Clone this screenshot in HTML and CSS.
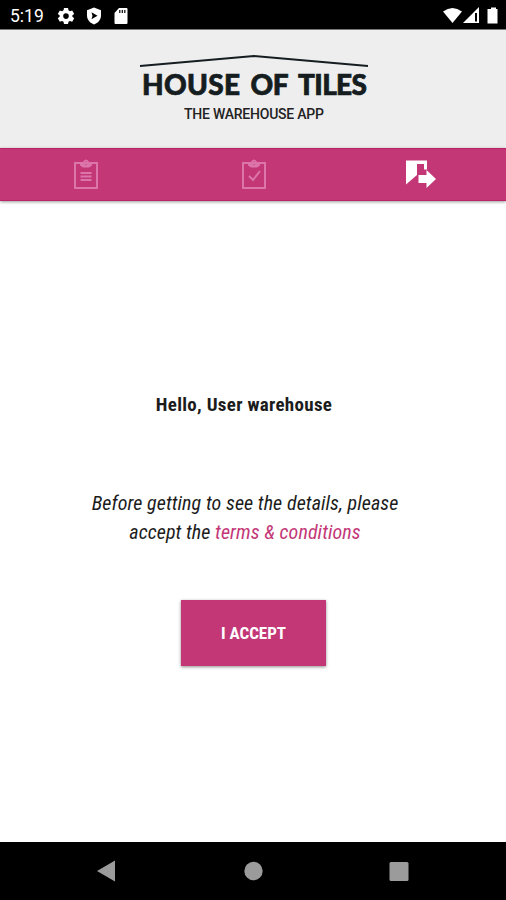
FILE: index.html
```html
<!DOCTYPE html>
<html lang="en">
<head>
  <meta charset="UTF-8" />
  <meta name="viewport" content="width=device-width, initial-scale=1.0" />
  <title>House of Tiles - The Warehouse App</title>
  <link rel="stylesheet" href="styles.css">
</head>
<body>
  <div class="status-bar">
    <div class="status-left">
      <span class="clock">5:19</span>
      <svg width="18" height="18" viewBox="0 0 18 18" fill="#fff">
        <path fill-rule="evenodd" d="M7 1h4l.5 2.300 1.500.9 2.200-.8 2 3.500L15.400 8.300v1.500l1.800 1.500-2 3.400-2.200-.8-1.500.9L11 17H7l-.5-2.200-1.500-.9-2.200.8-2-3.400 1.800-1.500V8.300L.8 6.900l2-3.500 2.200.8 1.500-.9zM9 6.300a2.800 2.800 0 1 0 0 5.600 2.800 2.800 0 0 0 0-5.600z"/>
      </svg>
      <svg width="16" height="18" viewBox="0 0 16 18">
        <path fill="#fff" d="M8 .5l7 2.800v5.200c0 4.300-3 7.500-7 9-4-1.500-7-4.700-7-9V3.300z"/>
        <path fill="#000" d="M5.500 5.300l6 3.500-6 3.500 1-3.500z"/>
      </svg>
      <svg width="14" height="16" viewBox="0 0 14 16">
        <path fill="#fff" d="M5 0h7.500q1 0 1 1v14q0 1-1 1h-11q-1 0-1-1V5z"/>
        <path stroke="#000" stroke-width="1.200" d="M5.800 2v3M8.300 2v3M10.800 2v3"/>
      </svg>
    </div>
    <svg class="status-right" width="56" height="18" viewBox="0 0 56 18" fill="#fff">
      <path d="M0 4.500Q9.500-2.500 19 4.500L9.500 16z"/>
      <path fill-rule="evenodd" d="M36 0v16H20zM32 6v8.500h2V6z"/>
      <path d="M46.500 2H48V.5h5V2h1.500v14.500h-10V2z"/>
    </svg>
  </div>

  <header>
    <svg class="logo" width="230" height="70" viewBox="0 0 230 70">
      <path d="M1 12L115 2l114 10" fill="none" stroke="#151d20" stroke-width="2"/>
      <g class="logo-name">
        <text x="3" y="40.500" textLength="98">HOUSE</text>
        <text x="111.500" y="40.500" textLength="38">OF</text>
        <text x="159" y="40.500" textLength="69">TILES</text>
      </g>
      <text class="logo-sub" x="45" y="64.500" textLength="140">THE WAREHOUSE APP</text>
    </svg>
  </header>

  <nav class="tabs">
    <a class="tab">
      <svg width="26" height="32" viewBox="0 0 26 32" fill="none" stroke="#dc76aa" stroke-width="2">
        <path d="M2 4h22v25H2zM7.500 14h11M7.500 17.500h11M7.500 21h11"/>
        <path fill="#dc76aa" stroke="none" fill-rule="evenodd" d="M7 3h3q1-2.500 3-2.500T16 3h3v3.500l-3 2h-6l-3-2zM11 4a2 1.500 0 1 0 4 0 2 1.500 0 1 0-4 0z"/>
      </svg>
    </a>
    <a class="tab">
      <svg width="26" height="32" viewBox="0 0 26 32" fill="none" stroke="#dc76aa" stroke-width="2">
        <path d="M2 4h22v25H2zM8 17l4 4 7-9"/>
        <path fill="#dc76aa" stroke="none" fill-rule="evenodd" d="M7 3h3q1-2.500 3-2.500T16 3h3v3.500l-3 2h-6l-3-2zM11 4a2 1.500 0 1 0 4 0 2 1.500 0 1 0-4 0z"/>
      </svg>
    </a>
    <a class="tab">
      <svg width="32" height="32" viewBox="0 0 32 32" fill="#fff">
        <path d="M1 1.500h21v9h-3V5h-7v11L1 25.500z"/>
        <path d="M13.500 16h8v-5L31 20l-9.500 9v-5h-8z"/>
      </svg>
    </a>
  </nav>

  <main>
    <h2>Hello, User warehouse</h2>
    <p class="terms">Before getting to see the details, please<br>accept the <a>terms &amp; conditions</a></p>
    <button><span>I ACCEPT</span></button>
  </main>

  <footer class="system-nav">
    <svg width="506" height="58" viewBox="0 0 506 58" fill="#9b9b9b">
      <path d="M97 29L115 18.500v21z"/>
      <circle cx="253.500" cy="29" r="9.200"/>
      <rect x="389.500" y="20" width="19" height="19" rx="1.500"/>
    </svg>
  </footer>
</body>
</html>
```
FILE: styles.css
```css
body {
  margin: 0;
  height: 900px;
  display: flex;
  flex-direction: column;
  overflow: hidden;
  background: #fff;
  font-family: "Roboto Condensed", Roboto, sans-serif;
  font-stretch: condensed;
  color: #1c1c1c;
}
svg {
  display: block;
}
.status-bar {
  height: 30px;
  box-sizing: border-box;
  padding: 2px 7px 0 10px;
  display: flex;
  justify-content: space-between;
  align-items: center;
  background: #000;
  border-bottom: 1px solid #777;
}
.status-left {
  display: flex;
  align-items: center;
  gap: 11.5px;
}
.clock {
  width: 35px;
  font-family: Roboto, sans-serif;
  font-stretch: normal;
  font-size: 17.5px;
  color: #fff;
}
header {
  height: 118px;
  display: flex;
  background: #eee;
}
.logo {
  margin: 24px auto 0 139px;
}
.logo-name {
  font: 900 28px Lato, sans-serif;
  fill: #151d20;
  stroke: #151d20;
  stroke-width: 0.7px;
}
.logo-sub {
  font: 500 14px Roboto, sans-serif;
  fill: #222;
}
.tabs {
  height: 53px;
  display: grid;
  grid-template-columns: repeat(3, 167.500px);
  background: #c33777;
  border-top: 1px solid #b82567;
  border-bottom: 1px solid #b82567;
  box-sizing: border-box;
  box-shadow: 0 1px 3px rgba(0,0,0,0.4);
}
.tab {
  display: flex;
  justify-content: center;
  align-items: center;
  padding-left: 5px;
}
main {
  flex: 1;
  display: flex;
  flex-direction: column;
  align-items: center;
}
h2 {
  margin: 192px 18px 0 0;
  font-size: 19px;
  line-height: 24px;
  letter-spacing: 0.3px;
}
.terms {
  margin: 72px 16px 0 0;
  font-size: 20px;
  font-weight: 400;
  font-style: italic;
  line-height: 29px;
  letter-spacing: 0.08px;
  text-align: center;
}
.terms a {
  color: #c33777;
}
button {
  width: 145px;
  height: 66px;
  margin: 53px 0 0 1px;
  border: 0;
  background: #c33777;
  color: #fff;
  font: inherit;
  font-weight: bold;
  font-size: 17px;
  box-shadow: 0 1px 3px rgba(0,0,0,0.45);
}
.system-nav {
  height: 58px;
  background: #000;
}
```
